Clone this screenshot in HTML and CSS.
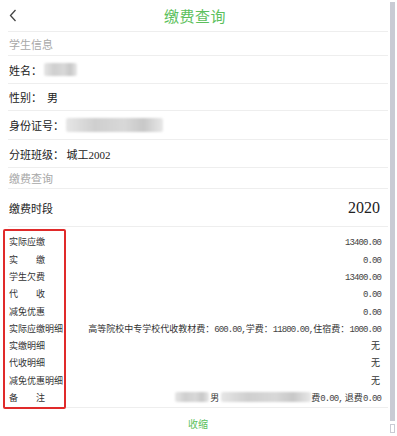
FILE: index.html
```html
<!DOCTYPE html>
<html lang="zh-CN">
<head>
<meta charset="utf-8">
<title>缴费查询</title>
<link rel="stylesheet" href="styles.css">
</head>
<body>
<div class="page">
  <main class="main">
    <header class="header">
      <span class="back">
        <svg width="8" height="14" viewBox="0 0 8 14"><polyline points="6.5,1 1.5,6.5 6.5,12" fill="none" stroke="#444" stroke-width="1.3"/></svg>
      </span>
      <h1 class="title">缴费查询</h1>
      <span></span>
    </header>

    <div class="section-label sl-1">学生信息</div>
    <div class="row r-name">姓名：<span class="blur blur-name"></span></div>
    <div class="row r-sex">性别：&nbsp; 男</div>
    <div class="row r-id">身份证号：<span class="blur blur-id"></span></div>
    <div class="row r-class">分班班级：&nbsp; <span class="serif-val">城工2002</span></div>
    <div class="section-label sl-2">缴费查询</div>
    <div class="row r-period"><span>缴费时段</span><span class="year">2020</span></div>

    <div class="details">
      <div class="labels">
        <div class="lb">实际应缴</div>
        <div class="lb sp">实<span>缴</span></div>
        <div class="lb">学生欠费</div>
        <div class="lb sp">代<span>收</span></div>
        <div class="lb">减免优惠</div>
        <div class="lb">实际应缴明细</div>
        <div class="lb">实缴明细</div>
        <div class="lb">代收明细</div>
        <div class="lb">减免优惠明细</div>
        <div class="lb sp">备<span>注</span></div>
      </div>
      <div class="values">
        <div class="vl"><span class="num">13400.00</span></div>
        <div class="vl"><span class="num">0.00</span></div>
        <div class="vl"><span class="num">13400.00</span></div>
        <div class="vl"><span class="num">0.00</span></div>
        <div class="vl"><span class="num">0.00</span></div>
        <div class="vl">高等院校中专学校代收教材费：<span class="num">600.00,</span>学费：<span class="num">11800.00,</span>住宿费：<span class="num">1000.00</span></div>
        <div class="vl">无</div>
        <div class="vl">无</div>
        <div class="vl">无</div>
        <div class="vl"><span class="blur blur-a"></span>男<span class="blur blur-b"></span>费<span class="num">0.00,</span> 退费<span class="num">0.00</span></div>
      </div>
    </div>

    <div class="collapse">收缩</div>
  </main>
  <aside class="scrollbar">
    <div class="thumb"></div>
    <div class="arrow"></div>
  </aside>
</div>
</body>
</html>
```

FILE: styles.css
```css
* { box-sizing: border-box; margin: 0; padding: 0; }
html, body { background: #fff; }
body {
  width: 397px;
  height: 436px;
  overflow: hidden;
  font-family: "Noto Sans CJK SC", "Noto Sans", sans-serif;
  color: #222;
}
.page {
  display: flex;
  height: 436px;
}
.main {
  width: 390px;
  padding: 0 2px 0 8px;
}
.header {
  height: 32px;
  display: grid;
  grid-template-columns: 24px 1fr 30px;
  align-items: center;
  border-bottom: 1px solid #eeeeee;
}
.back {
  display: flex;
  align-items: center;
  padding-left: 1px;
  padding-top: 1px;
}
.title {
  text-align: center;
  font-size: 15px;
  font-weight: normal;
  color: #5cbf5c;
  letter-spacing: 0.5px;
}
.section-label {
  display: flex;
  align-items: center;
  padding-left: 1px;
  font-size: 11px;
  color: #a8a8a8;
  border-bottom: 1px solid #eeeeee;
}
.sl-1 { height: 24px; }
.sl-2 { height: 21px; }
.row {
  display: flex;
  align-items: center;
  padding: 0 8px 0 1px;
  font-size: 11px;
  color: #222;
  border-bottom: 1px solid #eeeeee;
}
.r-name { height: 28px; }
.r-sex { height: 27px; }
.r-id { height: 29px; }
.r-class { height: 28px; }
.r-period { height: 38px; justify-content: space-between; padding-top: 1px; }
.serif-val { font-family: "Liberation Serif", "Noto Sans CJK SC", serif; font-size: 11px; }
.year {
  font-family: "Liberation Serif", serif;
  font-size: 16px;
  color: #222;
}
.blur {
  display: inline-block;
  background: linear-gradient(90deg, #e6e6e6, #cfcfcf 30%, #d8d8d8 60%, #c8c8c8 80%, #e8e8e8);
  border-radius: 2px;
  filter: blur(0.8px);
}
.blur-name { width: 33px; height: 13px; margin-left: 2px; }
.blur-id { width: 97px; height: 14px; margin-left: 2px; }
.details {
  display: flex;
  margin-left: -5px;
  margin-top: 2px;
}
.labels {
  border: 2px solid #e02a2a;
  border-radius: 2px;
  padding: 2.4px 1px 1px 4px;
  flex: none;
}
.lb, .vl {
  height: 17.3px;
  line-height: 17.3px;
  font-size: 9px;
  white-space: nowrap;
}
.lb { color: #333; width: 54px; }
.lb.sp { display: flex; justify-content: space-between; width: 36px; }
.values {
  flex: 1;
  padding: 4.4px 8px 0 0;
  text-align: right;
  color: #333;
  border-bottom: 1px solid #eeeeee;
  margin-bottom: 1px;
}
.num {
  font-family: "Liberation Mono", monospace;
  font-size: 9px;
  letter-spacing: -0.9px;
  color: #444;
}
.vl .num:last-child { margin-right: -0.9px; }
.blur-a { width: 34px; height: 10px; vertical-align: -1px; margin-right: 1px; }
.blur-b { width: 90px; height: 10px; vertical-align: -1px; margin-left: 2px; }
.collapse {
  text-align: center;
  font-size: 10px;
  color: #5cbf5c;
  padding-top: 7px;
}
.scrollbar {
  width: 7px;
  display: flex;
  flex-direction: column;
  align-items: flex-start;
  padding-top: 2px;
}
.thumb {
  width: 5px;
  height: 419px;
  background: #c9cbd4;
}
.arrow {
  width: 5px;
  height: 9px;
  margin-top: 3px;
  border: 1px solid #c9cbd4;
  background: #fff;
}
```
